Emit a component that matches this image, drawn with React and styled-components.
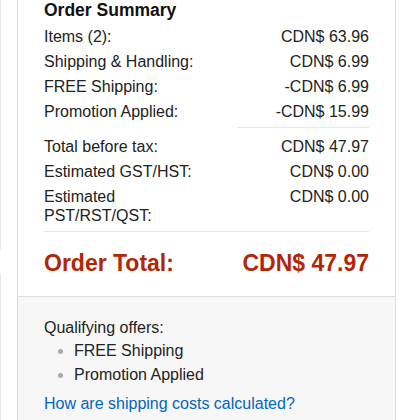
import React from 'react';
import styled, { createGlobalStyle } from 'styled-components';

const GlobalStyle = createGlobalStyle`
  html, body {
    margin: 0;
    padding: 0;
    background: #fff;
  }
  body {
    font-family: "Liberation Sans", Arial, sans-serif;
    color: #222;
  }
`;

const ScPage = styled.div`
  display: flex;
  align-items: flex-start;
  width: 420px;
  height: 420px;
  overflow: hidden;

  .rail {
    display: flex;
    flex-direction: column;
    width: 1px;
    height: 420px;

    .railTop {
      height: 250px;
      background: #e7e7e7;
    }

    .railGap {
      height: 23px;
    }

    .railBottom {
      flex: 1;
      background: #e7e7e7;
    }
  }
`;

const ScCard = styled.div`
  margin-left: 16px;
  width: 377px;
  border: 1px solid #ddd;
  border-top: none;
  background: #fff;

  .summary {
    padding: 0 26px 19px 26px;
  }

  .title {
    margin: 0;
    font-size: 17.5px;
    line-height: 20px;
    font-weight: 700;
    color: #111;
  }

  .rows {
    display: grid;
    grid-template-columns: 180px 1fr;
    column-gap: 13px;
    row-gap: 6px;
    margin-top: 7px;
    font-size: 16px;
    line-height: 19px;
  }

  .value {
    text-align: right;
    white-space: nowrap;
  }

  .totalRow {
    display: flex;
    justify-content: space-between;
    font-size: 23px;
    line-height: 28px;
    font-weight: 700;
    color: #b12704;
  }

  .offers {
    background: #f7f7f7;
    border-top: 1px solid #ddd;
    padding: 21px 26px 20px 26px;
    font-size: 16px;
    line-height: 19px;

    ul {
      margin: 4px 0 0 0;
      padding-left: 30px;

      li {
        margin-bottom: 4.5px;

        &::marker {
          color: #aaa;
          font-size: 15px;
        }
      }
    }

    a {
      display: inline-block;
      margin-top: 6px;
      color: #0066c0;
      text-decoration: none;
    }
  }
`;

const ScDivider = styled.div`
  grid-column: ${({ $full }) => ($full ? '1 / -1' : '2')};
  height: 1px;
  background: #e7e7e7;
  margin: ${({ $full }) => ($full ? '6px 0 17px 0' : '0 0 3px 0')};
`;

const summaryRows = [
  ['Items (2):', 'CDN$ 63.96'],
  ['Shipping & Handling:', 'CDN$ 6.99'],
  ['FREE Shipping:', '-CDN$ 6.99'],
  ['Promotion Applied:', '-CDN$ 15.99'],
];

const taxRows = [
  ['Total before tax:', 'CDN$ 47.97'],
  ['Estimated GST/HST:', 'CDN$ 0.00'],
  ['Estimated PST/RST/QST:', 'CDN$ 0.00'],
];

const App = () => (
  <>
    <GlobalStyle />
    <ScPage>
      <div className="rail">
        <div className="railTop" />
        <div className="railGap" />
        <div className="railBottom" />
      </div>
      <ScCard>
        <div className="summary">
          <h3 className="title">Order Summary</h3>
          <div className="rows">
            {summaryRows.map(([label, value]) => (
              <React.Fragment key={label}>
                <div className="label">{label}</div>
                <div className="value">{value}</div>
              </React.Fragment>
            ))}
            <ScDivider />
            {taxRows.map(([label, value]) => (
              <React.Fragment key={label}>
                <div className="label">{label}</div>
                <div className="value">{value}</div>
              </React.Fragment>
            ))}
          </div>
          <ScDivider $full />
          <div className="totalRow">
            <span>Order Total:</span>
            <span>CDN$ 47.97</span>
          </div>
        </div>
        <div className="offers">
          <div>Qualifying offers:</div>
          <ul>
            <li>FREE Shipping</li>
            <li>Promotion Applied</li>
          </ul>
          <a href="#shipping">How are shipping costs calculated?</a>
        </div>
      </ScCard>
    </ScPage>
  </>
);

export default App;
